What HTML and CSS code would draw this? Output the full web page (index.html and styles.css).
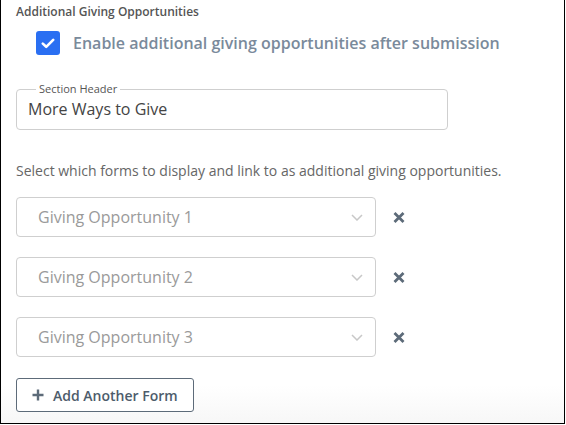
FILE: index.html
```html
<!DOCTYPE html>
<html>
<head>
<meta charset="utf-8">
<link rel="stylesheet" href="styles.css">
</head>
<body>
<div class="frame">
  <div class="title">Additional Giving Opportunities</div>
  <label class="check-row">
    <span class="checkbox">
      <svg width="14" height="11" viewBox="0 0 14 11"><path d="M1.8 5.6 L5.2 8.8 L12.2 1.8" fill="none" stroke="#fff" stroke-width="2.6" stroke-linecap="round" stroke-linejoin="round"/></svg>
    </span>
    <span class="check-label">Enable additional giving opportunities after submission</span>
  </label>
  <fieldset class="field">
    <legend>Section Header</legend>
    <div class="field-value">More Ways to Give</div>
  </fieldset>
  <p class="desc">Select which forms to display and link to as additional giving opportunities.</p>
  <div class="rows">
    <div class="row">
      <div class="select"><span>Giving Opportunity 1</span>
        <svg class="chev" width="12" height="7" viewBox="0 0 12 7"><path d="M1 1 L6 6 L11 1" fill="none" stroke="#c8c8c8" stroke-width="1.5"/></svg>
      </div>
      <svg class="remove" width="12" height="11" viewBox="0 0 12 11"><path d="M1.5 1 L10.5 10 M10.5 1 L1.5 10" stroke="#5d6b79" stroke-width="2.8"/></svg>
    </div>
    <div class="row">
      <div class="select"><span>Giving Opportunity 2</span>
        <svg class="chev" width="12" height="7" viewBox="0 0 12 7"><path d="M1 1 L6 6 L11 1" fill="none" stroke="#c8c8c8" stroke-width="1.5"/></svg>
      </div>
      <svg class="remove" width="12" height="11" viewBox="0 0 12 11"><path d="M1.5 1 L10.5 10 M10.5 1 L1.5 10" stroke="#5d6b79" stroke-width="2.8"/></svg>
    </div>
    <div class="row">
      <div class="select"><span>Giving Opportunity 3</span>
        <svg class="chev" width="12" height="7" viewBox="0 0 12 7"><path d="M1 1 L6 6 L11 1" fill="none" stroke="#c8c8c8" stroke-width="1.5"/></svg>
      </div>
      <svg class="remove" width="12" height="11" viewBox="0 0 12 11"><path d="M1.5 1 L10.5 10 M10.5 1 L1.5 10" stroke="#5d6b79" stroke-width="2.8"/></svg>
    </div>
  </div>
  <button class="add-btn">
    <svg width="12" height="12" viewBox="0 0 12 12"><path d="M6 0.5 V11.5 M0.5 6 H11.5" stroke="#5d6b79" stroke-width="2.4"/></svg>
    <span>Add Another Form</span>
  </button>
</div>
</body>
</html>
```
FILE: styles.css
```css
html, body {
  margin: 0;
  padding: 0;
  background: #fff;
}
body {
  font-family: "Open Sans", "Noto Sans", sans-serif;
}
.frame {
  box-sizing: border-box;
  width: 565px;
  height: 424px;
  border: 1px solid #000;
  border-top: none;
  padding: 3px 0 0 15px;
  background: linear-gradient(to bottom, #fff 0, #fff 385px, #f7f7f7 423px);
  display: flex;
  flex-direction: column;
  align-items: flex-start;
}
.title {
  font-size: 12px;
  font-weight: 600;
  color: #555;
  line-height: 18px;
}
.check-row {
  display: flex;
  align-items: center;
  margin: 10px 0 0 20px;
  gap: 13px;
}
.checkbox {
  width: 24px;
  height: 24px;
  border-radius: 3px;
  background: #2a6ff2;
  display: flex;
  align-items: center;
  justify-content: center;
}
.check-label {
  font-size: 16px;
  font-weight: 600;
  color: #7a8a9b;
  line-height: 24px;
}
.field {
  box-sizing: border-box;
  width: 432px;
  height: 47px;
  margin: 28px 0 0 0;
  padding: 0 11px;
  border: 1px solid #cfcfcf;
  border-radius: 4px;
  min-width: 0;
}
.field legend {
  font-size: 11px;
  color: #555;
  padding: 0 3px;
  margin-left: 8px;
  line-height: 12px;
}
.field-value {
  font-size: 16px;
  color: #444;
  line-height: 22px;
  margin-top: 3px;
}
.desc {
  margin: 31px 0 0 0;
  font-size: 14px;
  color: #666;
  line-height: 20px;
}
.rows {
  display: flex;
  flex-direction: column;
  gap: 20px;
  margin-top: 16px;
}
.row {
  display: flex;
  align-items: center;
  gap: 17px;
}
.select {
  box-sizing: border-box;
  width: 360px;
  height: 40px;
  border: 1px solid #cfcfcf;
  border-radius: 4px;
  display: flex;
  align-items: center;
  justify-content: space-between;
  padding: 0 12px 0 21px;
  font-size: 16px;
  color: #9a9a9a;
}
.add-btn {
  margin-top: 21px;
  box-sizing: border-box;
  width: 178px;
  height: 34px;
  border: 1px solid #5d6b79;
  border-radius: 3px;
  background: #fff;
  display: flex;
  align-items: center;
  gap: 9px;
  padding: 0 0 0 15px;
  font-family: "Open Sans", sans-serif;
  font-size: 14px;
  font-weight: 600;
  color: #4d5c6b;
}
```
